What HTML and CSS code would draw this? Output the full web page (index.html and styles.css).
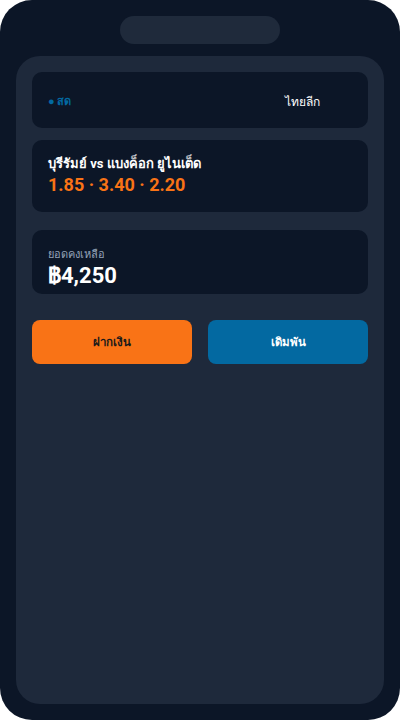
FILE: index.html
```html
<!DOCTYPE html>
<html lang="th">
<head>
<meta charset="utf-8">
<link rel="stylesheet" href="styles.css">
</head>
<body>
<div class="phone">
  <div class="notch"></div>
  <div class="screen">
    <div class="card bar">
      <span class="live"><span class="dot">●</span> สด</span>
      <span class="league">ไทยลีก</span>
    </div>
    <div class="card match">
      <div class="title">บุรีรัมย์ vs แบงค็อก ยูไนเต็ด</div>
      <div class="odds">1.85 · 3.40 · 2.20</div>
    </div>
    <div class="card balance">
      <div class="label">ยอดคงเหลือ</div>
      <div class="amount">฿4,250</div>
    </div>
    <div class="actions">
      <button class="btn deposit">ฝากเงิน</button>
      <button class="btn bet">เดิมพัน</button>
    </div>
  </div>
</div>
</body>
</html>
```
FILE: styles.css
```css
* { box-sizing: border-box; }
html, body { margin: 0; padding: 0; background: #ffffff; }
body { font-family: Roboto, "Liberation Sans", sans-serif; }
.phone {
  width: 400px;
  height: 720px;
  background: #0c1627;
  border-radius: 32px;
  padding: 16px;
  display: flex;
  flex-direction: column;
  align-items: center;
}
.notch {
  width: 160px;
  height: 28px;
  border-radius: 14px;
  background: #1f2a3b;
  flex: none;
}
.screen {
  margin-top: 12px;
  width: 368px;
  flex: 1;
  background: #1e293b;
  border-radius: 24px;
  padding: 16px;
  display: flex;
  flex-direction: column;
}
.card {
  background: #0c1627;
  border-radius: 10px;
  padding: 16px;
}
.bar {
  height: 56px;
  display: flex;
  align-items: center;
  justify-content: space-between;
  padding-right: 48px;
  padding-top: 18px;
}
.live { color: #0369a1; font-size: 11px; font-weight: 700; }
.dot { font-family: "Liberation Sans", sans-serif; }
.league { color: #ffffff; font-size: 12px; }
.match { margin-top: 12px; height: 72px; padding-top: 14px; }
.title { color: #ffffff; font-size: 13px; font-weight: 700; line-height: 20px; }
.odds { color: #f97316; font-size: 18px; font-weight: 700; line-height: 22px; }
.balance { margin-top: 18px; height: 64px; padding-top: 17px; }
.label { color: #94a3b8; font-size: 11px; line-height: 16px; }
.amount { color: #ffffff; font-size: 22px; font-weight: 700; line-height: 26px; }
.actions {
  margin-top: 26px;
  display: grid;
  grid-template-columns: 1fr 1fr;
  gap: 16px;
}
.btn {
  height: 44px;
  border: none;
  border-radius: 8px;
  font-family: inherit;
  font-size: 11.5px;
  font-weight: 700;
}
.deposit { background: #f97316; color: #1a1a1a; }
.bet { background: #0369a1; color: #ffffff; }
```
